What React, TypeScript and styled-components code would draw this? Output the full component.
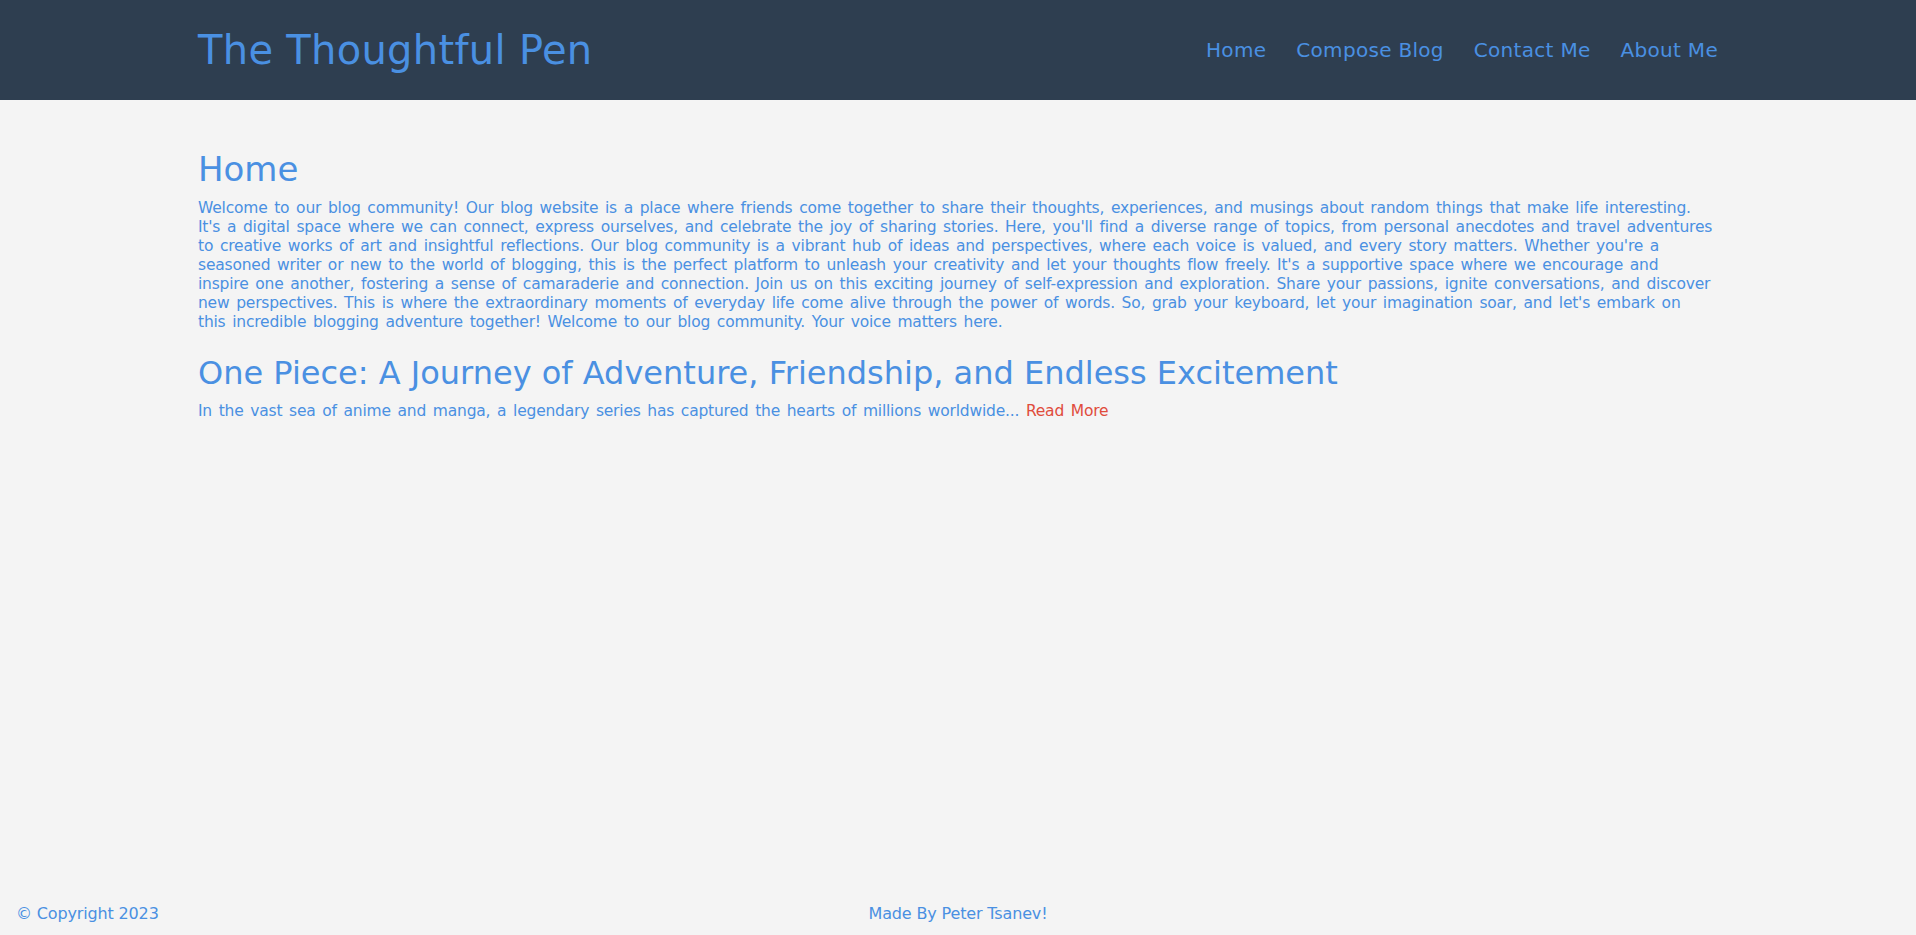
import React from "react";
import styled, { createGlobalStyle } from "styled-components";

const GlobalStyle = createGlobalStyle`
  * { box-sizing: border-box; }
  html, body { margin: 0; padding: 0; }
  body {
    background: #f4f4f4;
    font-family: "DejaVu Sans", "Noto Sans", sans-serif;
    color: #4a90e2;
  }
`;

const Page = styled.div`
  min-height: 100vh;
  display: flex;
  flex-direction: column;
`;

const Header = styled.header`
  background: #2e3e50;
  height: 100px;
`;

const HeaderInner = styled.div`
  width: 1520px;
  margin: 0 auto;
  height: 100%;
  display: flex;
  align-items: center;
  justify-content: space-between;
`;

const Brand = styled.a`
  font-size: 40px;
  font-weight: 400;
  letter-spacing: 0.3px;
  color: #4a90e2;
  text-decoration: none;
`;

const Nav = styled.nav`
  display: flex;
  gap: 30px;
`;

const NavLink = styled.a`
  font-size: 20px;
  letter-spacing: 0.3px;
  color: #4a90e2;
  text-decoration: none;
`;

const Main = styled.main`
  flex: 1;
  width: 1520px;
  margin: 0 auto;
  padding-top: 49px;
`;

const PageTitle = styled.h1`
  font-size: 34px;
  font-weight: 400;
  margin: 0 0 9px;
  line-height: 1.2;
`;

const Intro = styled.p`
  max-width: 1516px;
  font-size: 15.5px;
  line-height: 19px;
  letter-spacing: -0.2px;
  word-spacing: 2px;
  margin: 0 0 22px;
`;

const PostTitle = styled.h2`
  font-size: 32px;
  font-weight: 400;
  margin: 0 0 10px;
  line-height: 1.2;
`;

const Excerpt = styled.p`
  font-size: 15.5px;
  line-height: 19px;
  letter-spacing: -0.2px;
  word-spacing: 2px;
  margin: 0;
`;

const ReadMore = styled.a`
  color: #e04c3c;
  text-decoration: none;
`;

const Footer = styled.footer`
  display: grid;
  grid-template-columns: 1fr auto 1fr;
  align-items: center;
  padding: 0 16px 12px;
  font-size: 16px;
  letter-spacing: -0.15px;
`;

const FooterText = styled.span`
  color: #4a90e2;
`;

export default function App() {
  return (
    <Page>
      <GlobalStyle />
      <Header>
        <HeaderInner>
          <Brand href="#">The Thoughtful Pen</Brand>
          <Nav>
            <NavLink href="#">Home</NavLink>
            <NavLink href="#">Compose Blog</NavLink>
            <NavLink href="#">Contact Me</NavLink>
            <NavLink href="#">About Me</NavLink>
          </Nav>
        </HeaderInner>
      </Header>
      <Main>
        <PageTitle>Home</PageTitle>
        <Intro>
          Welcome to our blog community! Our blog website is a place where friends come together to share their thoughts, experiences, and musings about random things that make life interesting. It's a digital space where we can connect, express ourselves, and celebrate the joy of sharing stories. Here, you'll find a diverse range of topics, from personal anecdotes and travel adventures to creative works of art and insightful reflections. Our blog community is a vibrant hub of ideas and perspectives, where each voice is valued, and every story matters. Whether you're a seasoned writer or new to the world of blogging, this is the perfect platform to unleash your creativity and let your thoughts flow freely. It's a supportive space where we encourage and inspire one another, fostering a sense of camaraderie and connection. Join us on this exciting journey of self-expression and exploration. Share your passions, ignite conversations, and discover new perspectives. This is where the extraordinary moments of everyday life come alive through the power of words. So, grab your keyboard, let your imagination soar, and let's embark on this incredible blogging adventure together! Welcome to our blog community. Your voice matters here.
        </Intro>
        <PostTitle>One Piece: A Journey of Adventure, Friendship, and Endless Excitement</PostTitle>
        <Excerpt>
          In the vast sea of anime and manga, a legendary series has captured the hearts of millions worldwide...{" "}
          <ReadMore href="#">Read More</ReadMore>
        </Excerpt>
      </Main>
      <Footer>
        <FooterText>© Copyright 2023</FooterText>
        <FooterText>Made By Peter Tsanev!</FooterText>
        <span />
      </Footer>
    </Page>
  );
}
